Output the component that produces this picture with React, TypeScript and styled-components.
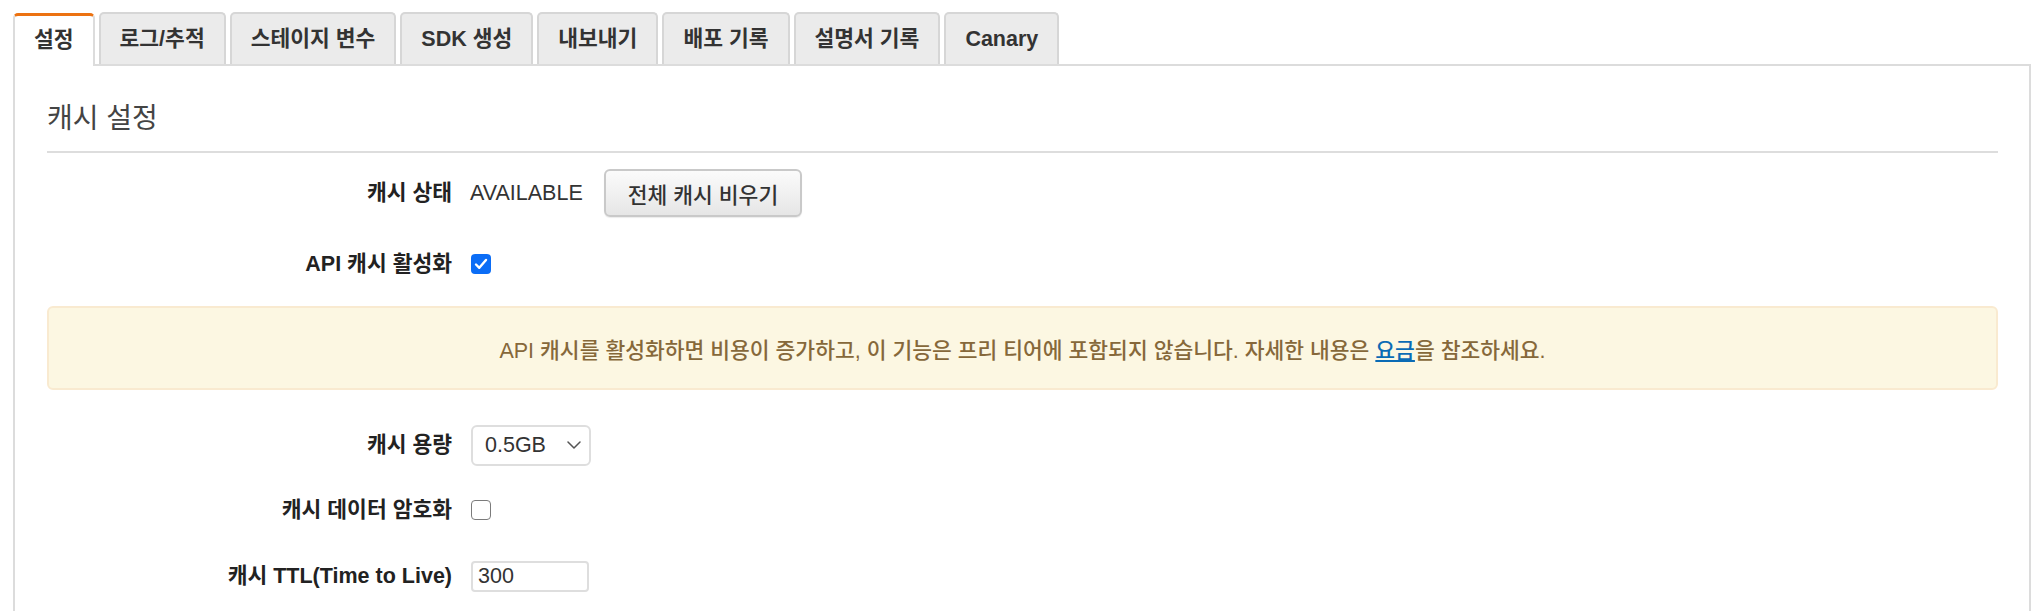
import React from 'react';
import styled, { createGlobalStyle, css } from 'styled-components';

const GlobalStyle = createGlobalStyle`
	html, body {
		margin: 0;
		padding: 0;
		overflow: hidden;
		background: #fff;
	}
	body {
		font-family: 'Liberation Sans', 'Noto Sans CJK KR', sans-serif;
		color: #333;
	}
`;

const Page = styled.div`
	display: flex;
	flex-direction: column;
	height: 611px;
	box-sizing: border-box;
	padding: 12px 13px 0;
`;

const TabBar = styled.div`
	display: flex;
	align-items: flex-end;
	gap: 4px;
	border-bottom: 2px solid #dcdcdc;
`;

const Tab = styled.div<{ $active?: boolean }>`
	display: flex;
	align-items: center;
	height: 52px;
	box-sizing: border-box;
	padding: 0 19px;
	font-size: 21.5px;
	line-height: 26px;
	font-weight: 700;
	color: #333;
	background: #ebebeb;
	border: 2px solid #d6d6d6;
	border-bottom: none;
	border-radius: 5px 5px 0 0;
	${(p) =>
		p.$active &&
		css`
			height: 53px;
			margin-bottom: -2px;
			background: #fff;
			border-color: #dcdcdc;
			border-top: 3px solid #ec7211;
			padding-bottom: 2px;
		`}
`;

const Panel = styled.div`
	flex: 1;
	border-left: 2px solid #dcdcdc;
	border-right: 2px solid #dcdcdc;
	padding: 38px 31px 0 32px;
`;

const SectionTitle = styled.h2`
	margin: 0;
	font-size: 28px;
	line-height: 30px;
	font-weight: 400;
	color: #444;
	padding-bottom: 17px;
	border-bottom: 2px solid #dddddd;
`;

const FormRow = styled.div<{ $mt: number }>`
	display: grid;
	grid-template-columns: 405px 1fr;
	column-gap: 18px;
	align-items: center;
	height: 48px;
	margin-top: ${(p) => p.$mt}px;
`;

const Label = styled.div`
	text-align: right;
	font-size: 21.5px;
	line-height: 26px;
	font-weight: 700;
	color: #222;
`;

const Field = styled.div`
	display: flex;
	align-items: center;
	gap: 21px;
`;

const Value = styled.span`
	font-size: 21.5px;
	line-height: 26px;
	color: #333;
`;

const Button = styled.button`
	height: 48px;
	padding: 0 22px;
	font-family: inherit;
	font-size: 21.5px;
	font-weight: 500;
	color: #333;
	background: linear-gradient(#fbfbfb, #e6e6e6);
	border: 2px solid #c9c9c9;
	border-radius: 6px;
	box-shadow: 0 1px 1px rgba(0, 0, 0, 0.08);
`;

const CheckBox = styled.span<{ $checked?: boolean }>`
	display: inline-flex;
	align-items: center;
	justify-content: center;
	width: 20px;
	height: 20px;
	margin-left: 1px;
	box-sizing: border-box;
	border-radius: 4px;
	background: ${(p) => (p.$checked ? '#0b6df6' : '#fff')};
	border: ${(p) => (p.$checked ? 'none' : '1.5px solid #7b7b7b')};
`;

const Alert = styled.div`
	display: flex;
	align-items: center;
	justify-content: center;
	height: 84px;
	box-sizing: border-box;
	margin-top: 18px;
	font-size: 21.5px;
	font-weight: 500;
	color: #86683a;
	background: #fcf7e2;
	border: 2px solid #f9ead0;
	border-radius: 6px;

	a {
		color: #0a6bb5;
		text-decoration: underline;
	}
`;

const SelectBox = styled.div`
	display: flex;
	align-items: center;
	justify-content: space-between;
	width: 120px;
	height: 41px;
	box-sizing: border-box;
	margin-left: 1px;
	padding: 0 8px 0 12px;
	border: 2px solid #dedede;
	border-radius: 6px;
	font-size: 21.5px;
	color: #333;
	background: #fff;
`;

const TextInput = styled.input`
	width: 118px;
	height: 31px;
	box-sizing: border-box;
	margin-left: 1px;
	padding: 0 5px;
	font-family: inherit;
	font-size: 21.5px;
	color: #333;
	border: 2px solid #dedede;
	border-radius: 4px;
	outline: none;
`;

const tabs = ['설정', '로그/추적', '스테이지 변수', 'SDK 생성', '내보내기', '배포 기록', '설명서 기록', 'Canary'];

export default function App() {
	return (
		<>
			<GlobalStyle />
			<Page>
				<TabBar>
					{tabs.map((t, i) => (
						<Tab key={t} $active={i === 0}>
							{t}
						</Tab>
					))}
				</TabBar>
				<Panel>
					<SectionTitle>캐시 설정</SectionTitle>

					<FormRow $mt={16}>
						<Label>캐시 상태</Label>
						<Field>
							<Value>AVAILABLE</Value>
							<Button>전체 캐시 비우기</Button>
						</Field>
					</FormRow>

					<FormRow $mt={23}>
						<Label>API 캐시 활성화</Label>
						<Field>
							<CheckBox $checked>
								<svg width='14' height='12' viewBox='0 0 14 12'>
									<path d='M2 6.5l3.3 3.3L12 2' fill='none' stroke='#fff' strokeWidth='2.4' strokeLinecap='round' strokeLinejoin='round' />
								</svg>
							</CheckBox>
						</Field>
					</FormRow>

					<Alert>
						<span>
							API 캐시를 활성화하면 비용이 증가하고, 이 기능은 프리 티어에 포함되지 않습니다. 자세한 내용은 <a href='#'>요금</a>을 참조하세요.
						</span>
					</Alert>

					<FormRow $mt={31}>
						<Label>캐시 용량</Label>
						<Field>
							<SelectBox>
								<span>0.5GB</span>
								<svg width='14' height='8' viewBox='0 0 14 8'>
									<path d='M1 1l6 6 6-6' fill='none' stroke='#555' strokeWidth='1.5' strokeLinecap='round' strokeLinejoin='round' />
								</svg>
							</SelectBox>
						</Field>
					</FormRow>

					<FormRow $mt={17}>
						<Label>캐시 데이터 암호화</Label>
						<Field>
							<CheckBox />
						</Field>
					</FormRow>

					<FormRow $mt={18}>
						<Label>캐시 TTL(Time to Live)</Label>
						<Field>
							<TextInput value='300' readOnly />
						</Field>
					</FormRow>
				</Panel>
			</Page>
		</>
	);
}
